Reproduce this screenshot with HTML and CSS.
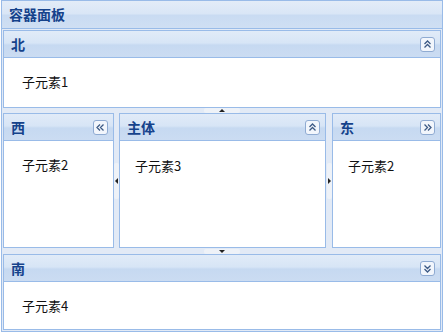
FILE: index.html
```html
<!DOCTYPE html>
<html lang="zh">
<head>
<meta charset="utf-8">
<title>容器面板</title>
<link rel="stylesheet" href="styles.css">
</head>
<body>
<div class="outer">
  <div class="outer-title">容器面板</div>
  <div class="outer-body">
    <div class="panel north">
      <div class="hd"><span class="tt">北</span>
        <svg class="tool" viewBox="0 0 15 15"><rect x="0.5" y="0.5" width="14" height="14" rx="2.5"/><path d="M4.5 7 L7.5 4 L10.5 7 M4.5 10.5 L7.5 7.5 L10.5 10.5"/></svg>
      </div>
      <div class="bd">子元素1</div>
    </div>
    <div class="split-h"><span class="mini mh"><i class="tri up"></i></span></div>
    <div class="middle">
      <div class="panel west">
        <div class="hd"><span class="tt">西</span>
          <svg class="tool" viewBox="0 0 15 15"><rect x="0.5" y="0.5" width="14" height="14" rx="2.5"/><path d="M7 4.5 L4 7.5 L7 10.5 M10.5 4.5 L7.5 7.5 L10.5 10.5"/></svg>
        </div>
        <div class="bd">子元素2</div>
      </div>
      <div class="split-v sv-w"><span class="mini mv"><i class="tri left"></i></span></div>
      <div class="panel center">
        <div class="hd"><span class="tt">主体</span>
          <svg class="tool" viewBox="0 0 15 15"><rect x="0.5" y="0.5" width="14" height="14" rx="2.5"/><path d="M4.5 7 L7.5 4 L10.5 7 M4.5 10.5 L7.5 7.5 L10.5 10.5"/></svg>
        </div>
        <div class="bd bd-narrow">子元素3</div>
      </div>
      <div class="split-v sv-e"><span class="mini mv"><i class="tri right"></i></span></div>
      <div class="panel east">
        <div class="hd"><span class="tt">东</span>
          <svg class="tool" viewBox="0 0 15 15"><rect x="0.5" y="0.5" width="14" height="14" rx="2.5"/><path d="M4.5 4.5 L7.5 7.5 L4.5 10.5 M8 4.5 L11 7.5 L8 10.5"/></svg>
        </div>
        <div class="bd bd-narrow">子元素2</div>
      </div>
    </div>
    <div class="split-h sh-s"><span class="mini mh"><i class="tri down"></i></span></div>
    <div class="panel south">
      <div class="hd"><span class="tt">南</span>
        <svg class="tool" viewBox="0 0 15 15"><rect x="0.5" y="0.5" width="14" height="14" rx="2.5"/><path d="M4.5 4.5 L7.5 7.5 L10.5 4.5 M4.5 8 L7.5 11 L10.5 8"/></svg>
      </div>
      <div class="bd">子元素4</div>
    </div>
  </div>
</div>
</body>
</html>
```
FILE: styles.css
```css
html, body {
  margin: 0;
  padding: 0;
  background: #ffffff;
}
body {
  font-family: "Liberation Sans", "Noto Sans CJK SC", sans-serif;
  font-size: 13px;
  color: #111;
}
.outer {
  margin-left: 1px;
  width: 440px;
  height: 330px;
  border: 1px solid #99bbe8;
  display: flex;
  flex-direction: column;
}
.outer-title {
  height: 27px;
  border-bottom: 1px solid #99bbe8;
  background: linear-gradient(#e3ecf8 0%, #d9e6f6 48%, #c9dbf2 52%, #cfdff3 100%);
  color: #15428b;
  font-weight: bold;
  font-size: 14px;
  line-height: 26px;
  padding-left: 7px;
  font-family: "Noto Sans CJK SC", sans-serif;
}
.outer-body {
  flex: 1;
  background: #e2eaf6;
  padding: 1px;
  display: flex;
  flex-direction: column;
}
.panel {
  border: 1px solid #99bbe8;
  background: #fff;
  display: flex;
  flex-direction: column;
  box-sizing: border-box;
}
.hd {
  height: 26px;
  border-bottom: 1px solid #99bbe8;
  background: linear-gradient(#e1ebf8 0%, #d7e5f6 46%, #c6d9f1 54%, #cbdcf2 100%);
  display: flex;
  align-items: center;
  justify-content: space-between;
  padding: 0 5px 0 7px;
  flex: none;
}
.tt {
  color: #15428b;
  font-weight: bold;
  font-size: 14px;
  font-family: "Noto Sans CJK SC", sans-serif;
}
.tool {
  width: 15px;
  height: 15px;
  display: block;
}
.tool rect {
  fill: #f2f6fc;
  stroke: #8fabd2;
}
.tool path {
  fill: none;
  stroke: #3d5a85;
  stroke-width: 1.3;
}
.bd {
  flex: 1;
  padding: 15px 18px;
  line-height: 18px;
  font-family: "Noto Sans CJK SC", sans-serif;
  font-size: 13px;
}
.bd-narrow {
  padding-left: 15px;
  padding-top: 16px;
}
.north {
  height: 78px;
}
.south {
  height: 76px;
}
.split-h {
  height: 5px;
  display: flex;
  justify-content: center;
  align-items: center;
}
.sh-s {
  height: 6px;
}
.middle {
  height: 135px;
  display: flex;
}
.west {
  width: 111px;
}
.center {
  flex: 1;
}
.east {
  width: 109px;
}
.split-v {
  width: 5px;
  display: flex;
  justify-content: center;
  align-items: center;
}
.sv-e {
  width: 6px;
}
.mini {
  display: flex;
  align-items: center;
  justify-content: center;
  background: #eef2f8;
}
.mh {
  width: 36px;
  height: 5px;
  border-radius: 2px;
}
.mv {
  width: 5px;
  height: 36px;
  border-radius: 2px;
}
.tri {
  width: 0;
  height: 0;
  border-style: solid;
  display: block;
}
.up {
  border-width: 0 3px 3px 3px;
  border-color: transparent transparent #222 transparent;
}
.down {
  border-width: 3px 3px 0 3px;
  border-color: #222 transparent transparent transparent;
}
.left {
  border-width: 3px 3px 3px 0;
  border-color: transparent #222 transparent transparent;
}
.right {
  border-width: 3px 0 3px 3px;
  border-color: transparent transparent transparent #222;
}
```
